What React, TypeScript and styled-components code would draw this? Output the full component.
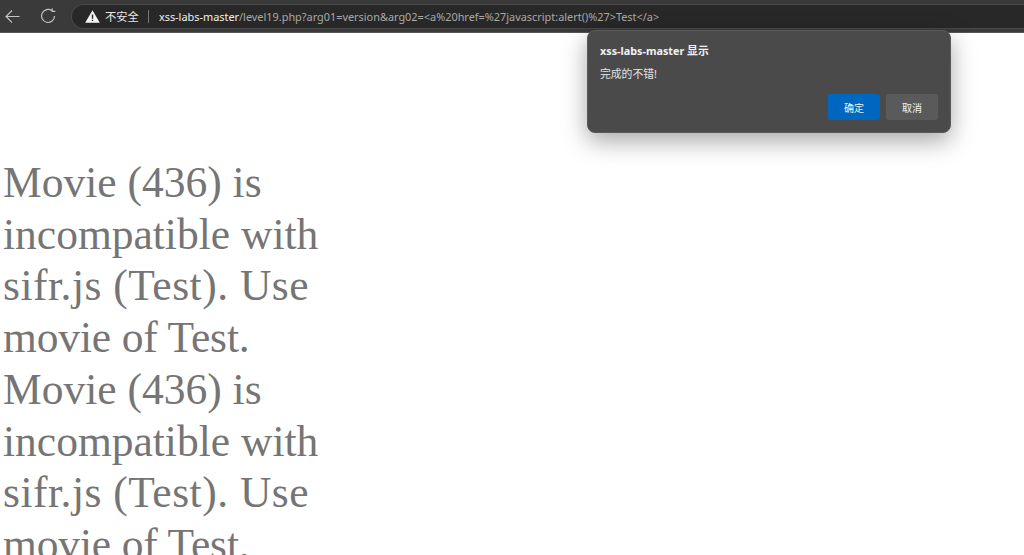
import React from "react";
import styled, { createGlobalStyle } from "styled-components";

const Global = createGlobalStyle`
  html, body { margin: 0; padding: 0; height: 555px; overflow: hidden; background: #fff; }
  #root { height: 555px; }
`;

const Page = styled.div`
  position: relative;
  width: 1024px;
  height: 555px;
  overflow: hidden;
  display: flex;
  flex-direction: column;
  font-family: "Noto Sans", "Noto Sans CJK SC", sans-serif;
`;

const Toolbar = styled.header`
  height: 33px;
  flex: none;
  box-sizing: border-box;
  background: #3a3a3a;
  border-bottom: 1px solid #555;
  display: flex;
  align-items: center;
`;

const NavButton = styled.button<{ $w: number }>`
  width: ${(p) => p.$w}px;
  height: 30px;
  flex: none;
  background: none;
  border: 0;
  padding: 0;
  display: flex;
  align-items: center;
  justify-content: center;
  color: #c4c4c4;
`;

const AddressBar = styled.div`
  flex: 1;
  height: 25px;
  box-sizing: border-box;
  background: #282828;
  border: 1px solid #4a4a4a;
  border-right: 0;
  border-radius: 13px 0 0 13px;
  display: flex;
  align-items: center;
  padding-left: 13px;
  font-size: 10.9px;
  white-space: nowrap;
  color: #a9a9a9;
`;

const Warn = styled.span`
  color: #e6e6e6;
  margin-left: 5px;
  font-family: "Noto Sans CJK SC", sans-serif;
  font-size: 11.3px;
`;

const Divider = styled.span`
  width: 1px;
  height: 13px;
  background: #777;
  margin: 0 10px 0 9px;
`;

const Host = styled.span`
  color: #f0f0f0;
`;

const Content = styled.main`
  flex: 1;
  padding-top: 124px;
  padding-left: 3px;
  font-family: "Liberation Serif", serif;
  font-size: 43.5px;
  line-height: 51.7px;
  color: #757575;
`;

const Line = styled.div<{ $track: number }>`
  white-space: nowrap;
  letter-spacing: ${(p) => p.$track}px;
`;

const Dialog = styled.div`
  position: absolute;
  left: 587px;
  top: 30px;
  width: 364px;
  height: 103px;
  box-sizing: border-box;
  background: #4a4a4a;
  border: 1px solid #5a5a5a;
  border-radius: 8px;
  box-shadow: 0 8px 24px rgba(0, 0, 0, 0.35);
  padding: 12px 12px 12px 12px;
  display: flex;
  flex-direction: column;
  color: #f2f2f2;
  font-size: 10.8px;
`;

const Title = styled.div`
  font-weight: 700;
  line-height: 16px;
`;

const Message = styled.div`
  margin-top: 7px;
  line-height: 16px;
  color: #e4e4e4;
`;

const Actions = styled.div`
  margin-top: auto;
  display: flex;
  justify-content: flex-end;
  gap: 6px;
`;

const DialogButton = styled.button<{ $primary?: boolean }>`
  width: 52px;
  height: 26px;
  border: 0;
  border-radius: 3px;
  padding: 0;
  background: ${(p) => (p.$primary ? "#0067c0" : "#5a5a5a")};
  color: #f4f4f4;
  font-family: "Noto Sans CJK SC", sans-serif;
  font-size: 10px;
`;

const lines = [
  { text: "Movie (436) is", track: 0 },
  { text: "incompatible with", track: 0 },
  { text: "sifr.js (Test). Use", track: 0.5 },
  { text: "movie of Test.", track: -0.15 },
  { text: "Movie (436) is", track: 0 },
  { text: "incompatible with", track: 0 },
  { text: "sifr.js (Test). Use", track: 0.5 },
  { text: "movie of Test.", track: -0.15 },
];

export default function App() {
  return (
    <Page>
      <Global />
      <Toolbar>
        <NavButton $w={25} aria-label="back">
          <svg width="15" height="15" viewBox="0 0 15 15" fill="none" stroke="currentColor" strokeWidth="1.1">
            <path d="M14.5 7.5H1M7 1.5 1 7.5l6 6" />
          </svg>
        </NavButton>
        <NavButton $w={46} aria-label="reload">
          <svg width="16" height="16" viewBox="0 0 15 15" fill="none" stroke="currentColor" strokeWidth="1.1">
            <path d="M13.6 7.5A6.1 6.1 0 1 1 11.2 2.6" />
            <path d="M11.4 0.2v3h3" />
          </svg>
        </NavButton>
        <AddressBar>
          <svg width="15" height="13" viewBox="0 0 15 13">
            <path d="M7.5 0.3 14.8 12.8H0.2Z" fill="#f4f4f4" />
            <path d="M6.8 4.4h1.4v4.4H6.8zM6.8 9.7h1.4v1.4H6.8z" fill="#282828" />
          </svg>
          <Warn>不安全</Warn>
          <Divider />
          <Host>xss-labs-master</Host>
          /level19.php?arg01=version&amp;arg02=&lt;a%20href=%27javascript:alert()%27&gt;Test&lt;/a&gt;
        </AddressBar>
      </Toolbar>
      <Content>
        {lines.map((l, i) => (
          <Line key={i} $track={l.track}>
            {l.text}
          </Line>
        ))}
      </Content>
      <Dialog>
        <Title>xss-labs-master 显示</Title>
        <Message>完成的不错!</Message>
        <Actions>
          <DialogButton $primary>确定</DialogButton>
          <DialogButton>取消</DialogButton>
        </Actions>
      </Dialog>
    </Page>
  );
}
